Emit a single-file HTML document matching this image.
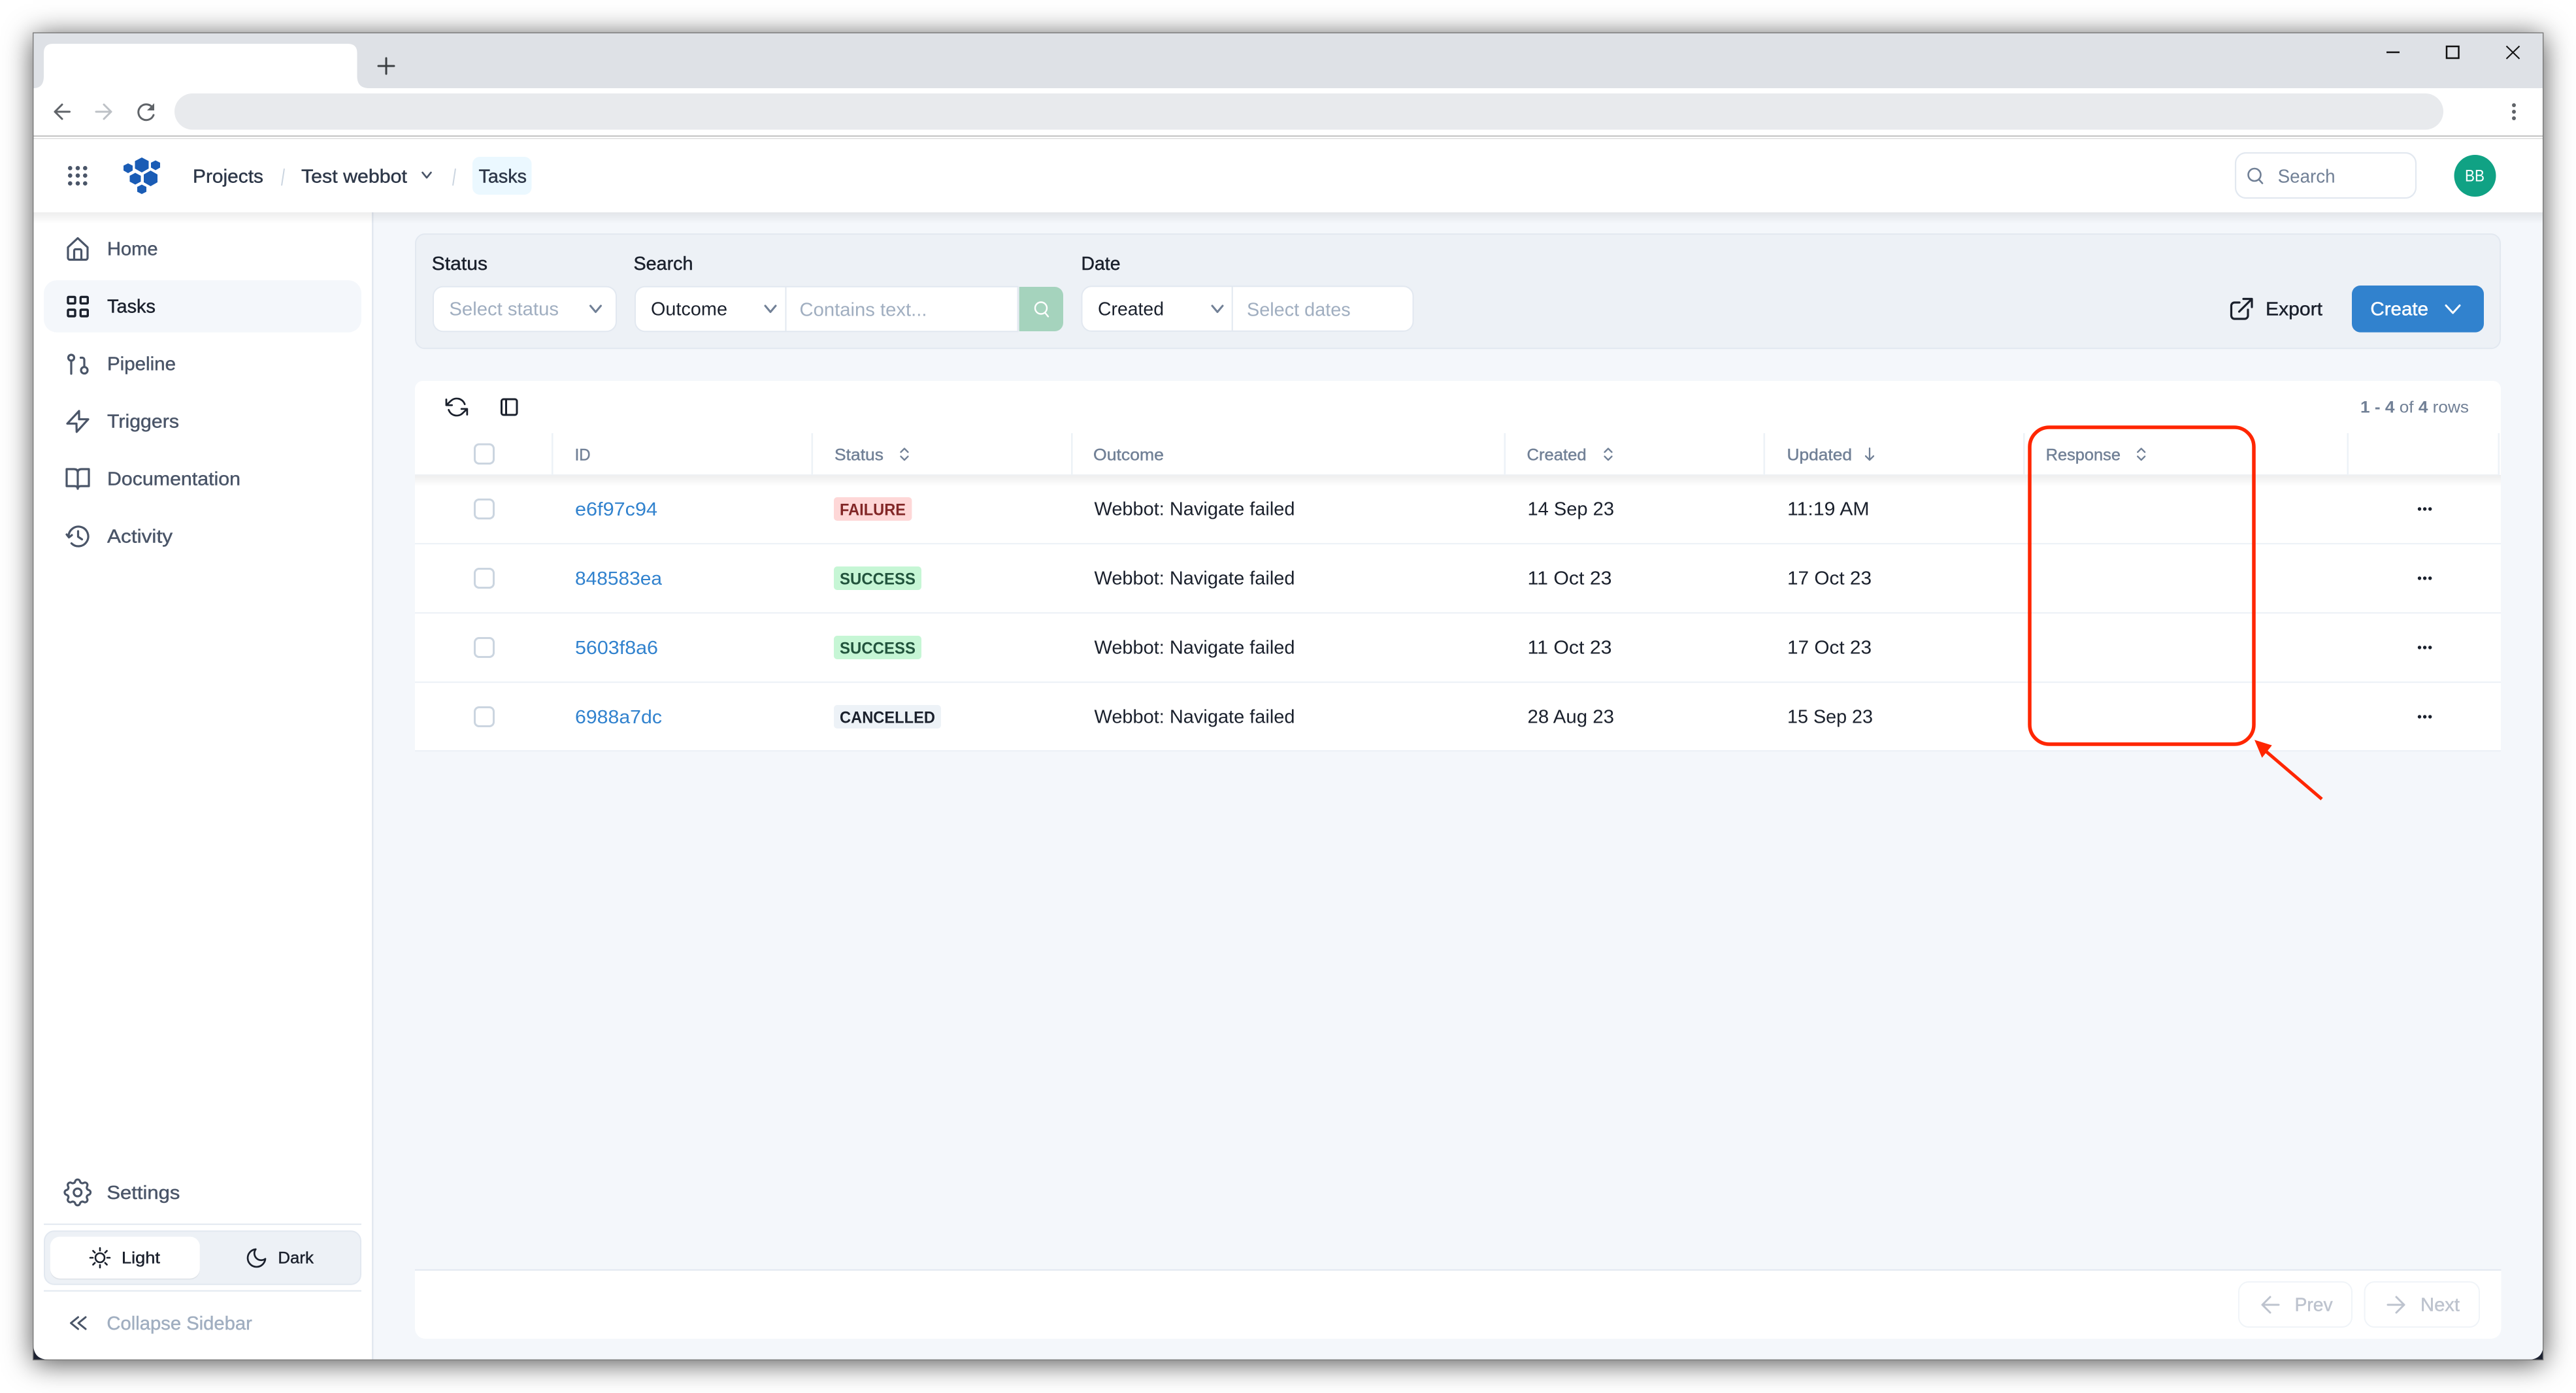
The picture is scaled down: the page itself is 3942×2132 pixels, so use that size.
<!DOCTYPE html>
<html><head><meta charset="utf-8"><title>Tasks</title>
<style>
html,body{margin:0;padding:0;background:#fff;width:3942px;height:2132px;overflow:hidden}
#shadow{position:absolute;left:51px;top:50px;width:3841px;height:2031px;box-shadow:0 5px 40px rgba(0,0,0,.7);background:#1b2030}
svg{position:absolute;left:0;top:0}
text{font-family:"Liberation Sans",sans-serif;font-size:29px;fill:#1a202c}
.s{font-size:25px}
.m{stroke:currentColor;stroke-width:.45px}
.g{color:#4a5568;fill:#4a5568}
.k{color:#1a202c;fill:#1a202c}
.p{fill:#a0aec0}
.h{color:#718096;fill:#718096}
.l{fill:#3182ce}
.b{font-weight:700;font-size:25px}
.i{fill:none;stroke-linecap:round;stroke-linejoin:round}
</style></head><body>
<div id="shadow"></div>
<svg width="3942" height="2132" viewBox="0 0 3942 2132" xmlns="http://www.w3.org/2000/svg">
<defs>
<linearGradient id="sh" x1="0" y1="0" x2="0" y2="1"><stop offset="0" stop-color="#000" stop-opacity=".07"/><stop offset="1" stop-color="#000" stop-opacity="0"/></linearGradient>
</defs>
<!-- window -->
<path d="M51 50H3892V2057Q3892 2081 3868 2081H75Q51 2081 51 2057Z" fill="#fff"/>
<rect x="51" y="50" width="3841" height="85" fill="#dee1e6"/>
<path d="M51 135Q67 135 67 117V81Q67 67 81 67H532Q546.5 67 546.5 81V117Q546.5 135 565 135Z" fill="#fff"/>
<path d="M579 101H603M591 89V113" class="i" stroke="#3c4043" stroke-width="3"/>
<path d="M3652 80H3672" stroke="#111" stroke-width="2.5"/>
<rect x="3744" y="71" width="18.5" height="18" fill="none" stroke="#111" stroke-width="2.5"/>
<path d="M3835.5 70.5L3855.5 90M3855.5 70.5L3835.5 90" stroke="#111" stroke-width="2"/>
<!-- toolbar -->
<rect x="267" y="143" width="3472" height="55.5" rx="27.7" fill="#e8eaed"/>
<path d="M106.5 171H84M95 160L84 171L95 182" class="i" stroke="#5f6368" stroke-width="3"/>
<path d="M147 171H170M159 160L170 171L159 182" class="i" stroke="#bdc1c6" stroke-width="3"/>
<path d="M232.5 163.5A12 12 0 1 0 235 176" class="i" stroke="#5f6368" stroke-width="3"/>
<path d="M236 158V169H225Z" fill="#5f6368"/>
<circle cx="3847" cy="161" r="3" fill="#5f6368"/><circle cx="3847" cy="171" r="3" fill="#5f6368"/><circle cx="3847" cy="181" r="3" fill="#5f6368"/>
<rect x="51" y="207.5" width="3841" height="1.5" fill="#b0b0b0"/>
<rect x="51" y="211" width="3841" height="2" fill="#e6e6e6"/>
<!-- main bg -->
<path d="M570 325H3892V2057Q3892 2081 3868 2081H570Z" fill="#f4f7fb"/>
<rect x="569" y="325" width="2.5" height="1756" fill="#e2e8f0"/>
<!-- nav shadow -->
<rect x="51" y="325" width="3841" height="18" fill="url(#sh)"/>
<!-- grid dots -->
<g fill="#4a5568"><circle cx="107.3" cy="257.3" r="3.3"/><circle cx="119" cy="257.3" r="3.3"/><circle cx="130.3" cy="257.3" r="3.3"/><circle cx="107.3" cy="268.7" r="3.3"/><circle cx="119" cy="268.7" r="3.3"/><circle cx="130.3" cy="268.7" r="3.3"/><circle cx="107.3" cy="280.7" r="3.3"/><circle cx="119" cy="280.7" r="3.3"/><circle cx="130.3" cy="280.7" r="3.3"/></g>
<!-- logo -->
<g fill="#1a5cb5">
<path d="M217 241L227.5 246.5V258L217 264L206.5 258V246.5Z"/>
<path d="M196 250L203 253.5V261L196 265L189 261V253.5Z"/>
<path d="M238 245.5L245 249V256.5L238 260.5L231 256.5V249Z"/>
<path d="M207 264.5L215.5 269V278L207 282.5L198.5 278V269Z"/>
<path d="M230.5 261L241 267V279L230.5 285L220 279V267Z"/>
<path d="M217 282.5L224 286V293.5L217 297L210 293.5V286Z"/>
</g>
<!-- breadcrumb -->
<text x="295" y="279.5" textLength="108" lengthAdjust="spacingAndGlyphs" class="m" style="color:#2d3748;fill:#2d3748">Projects</text>
<path d="M431 284L435 258M693 284L697 258" stroke="#cbd5e0" stroke-width="2"/>
<text x="461" y="279.5" textLength="162" lengthAdjust="spacingAndGlyphs" class="m" style="color:#2d3748;fill:#2d3748">Test webbot</text>
<path d="M646.5 264L653 272L659.5 264" class="i" stroke="#4a5568" stroke-width="2.6"/>
<rect x="723" y="240" width="90.5" height="58" rx="11" fill="#ebf8ff"/>
<text x="732.5" y="279.5" textLength="73.5" lengthAdjust="spacingAndGlyphs" class="m" style="color:#2d3748;fill:#2d3748">Tasks</text>
<!-- top search -->
<rect x="3421" y="234" width="276" height="69" rx="16" fill="#fff" stroke="#e2e8f0" stroke-width="2.2"/>
<circle cx="3450" cy="267.5" r="9.5" fill="none" stroke="#718096" stroke-width="2.6"/>
<path d="M3457 275L3462 280.5" class="i" stroke="#718096" stroke-width="2.6"/>
<text x="3485.6" y="279.5" textLength="88" lengthAdjust="spacingAndGlyphs" class="h">Search</text>
<circle cx="3787.5" cy="269" r="32" fill="#10a284"/>
<text x="3772" y="277.5" textLength="30" lengthAdjust="spacingAndGlyphs" class="s" style="fill:#fff">BB</text>
<!-- sidebar -->
<rect x="67" y="429" width="486" height="79.7" rx="20" fill="#f4f7fb"/>
<g class="i" stroke="#4a5568" stroke-width="3.2">
<path d="M104 378.5L119 364.5L134 378.5V394A3 3 0 0 1 131 397.5H107A3 3 0 0 1 104 394Z"/>
<path d="M113.5 397V383.5A2 2 0 0 1 115.5 381.5H122.5A2 2 0 0 1 124.5 383.5V397"/>
<circle cx="109" cy="547.5" r="4.5"/><path d="M109 552V572"/>
<circle cx="129" cy="566.7" r="5"/><path d="M123.5 547.5H126A3 3 0 0 1 129 550.5V561.5"/>
<path d="M121 629L103 648.3H117L117.3 661L135 641.7H121Z"/>
<path d="M102 718H113Q119 718 119 723Q119 718 125 718H136V744H124Q119 744 119 748Q119 744 114 744H102Z"/><path d="M119 723V748"/>
<path d="M105 821A15 15 0 1 1 109.4 831.6"/><path d="M102 818L105.5 822.5L110 819"/><path d="M119.5 813V821.5L125.5 825.5"/>
</g>
<g fill="none" stroke="#1a202c" stroke-width="3.4">
<rect x="104" y="454.4" width="11" height="10" rx="1.2"/><rect x="123.3" y="454.4" width="11" height="10" rx="1.2"/>
<rect x="104" y="474" width="11" height="10" rx="1.2"/><rect x="123.3" y="474" width="11" height="10" rx="1.2"/>
</g>
<text x="164" y="390.7" textLength="77.5" lengthAdjust="spacingAndGlyphs" class="m g">Home</text>
<text x="164" y="478.3" textLength="74" lengthAdjust="spacingAndGlyphs" class="m k">Tasks</text>
<text x="164" y="566.7" textLength="105" lengthAdjust="spacingAndGlyphs" class="m g">Pipeline</text>
<text x="164" y="654.7" textLength="110" lengthAdjust="spacingAndGlyphs" class="m g">Triggers</text>
<text x="164" y="742.7" textLength="204" lengthAdjust="spacingAndGlyphs" class="m g">Documentation</text>
<text x="164" y="830.7" textLength="100" lengthAdjust="spacingAndGlyphs" class="m g">Activity</text>
<g transform="translate(92.35 1798.6) scale(2.2)"><path class="i" stroke="#4a5568" stroke-width="1.45" d="M10.325 4.317c.426 -1.756 2.924 -1.756 3.35 0a1.724 1.724 0 0 0 2.573 1.066c1.543 -.94 3.31 .826 2.37 2.37a1.724 1.724 0 0 0 1.065 2.572c1.756 .426 1.756 2.924 0 3.35a1.724 1.724 0 0 0 -1.066 2.573c.94 1.543 -.826 3.31 -2.37 2.37a1.724 1.724 0 0 0 -2.572 1.065c-.426 1.756 -2.924 1.756 -3.35 0a1.724 1.724 0 0 0 -2.573 -1.066c-1.543 .94 -3.31 -.826 -2.37 -2.37a1.724 1.724 0 0 0 -1.065 -2.572c-1.756 -.426 -1.756 -2.924 0 -3.35a1.724 1.724 0 0 0 1.066 -2.573c-.94 -1.543 .826 -3.31 2.37 -2.37c1 .608 2.296 .07 2.572 -1.065z"/><circle cx="12" cy="12" r="2.7" class="i" stroke="#4a5568" stroke-width="1.45"/></g>
<text x="163.4" y="1835" textLength="112" lengthAdjust="spacingAndGlyphs" class="m g">Settings</text>
<rect x="67" y="1872.7" width="486" height="2" fill="#e2e8f0"/>
<rect x="68" y="1884.3" width="484" height="81.4" rx="15" fill="#edf1f6" stroke="#e2e8f0" stroke-width="2"/>
<rect x="76.8" y="1894.5" width="229" height="64" rx="15" fill="#000" opacity=".05"/>
<rect x="76.8" y="1892.7" width="229" height="64" rx="15" fill="#fff"/>
<circle cx="153" cy="1925" r="7" fill="none" stroke="#1a202c" stroke-width="2.6"/>
<path d="M153 1910V1914M153 1936V1940M138 1925H142M164 1925H168M142.4 1914.4L145.2 1917.2M160.8 1932.8L163.6 1935.6M142.4 1935.6L145.2 1932.8M160.8 1917.2L163.6 1914.4" class="i" stroke="#1a202c" stroke-width="2.6"/>
<text x="186" y="1933.3" textLength="59" lengthAdjust="spacingAndGlyphs" class="s m k">Light</text>
<g transform="translate(374.5 1907.5) scale(1.5)"><path class="i" stroke="#1a202c" stroke-width="1.8" d="M21 12.79A9 9 0 1 1 11.21 3 7 7 0 0 0 21 12.79z"/></g>
<text x="425.4" y="1933.3" textLength="54.5" lengthAdjust="spacingAndGlyphs" class="s m k">Dark</text>
<rect x="67" y="1974.7" width="486" height="2" fill="#e2e8f0"/>
<path d="M119.5 2016L108.5 2025L119.5 2034M131 2016L120 2025L131 2034" class="i" stroke="#4a5568" stroke-width="3"/>
<text x="163.4" y="2035" textLength="222.5" lengthAdjust="spacingAndGlyphs" class="m" style="color:#a0aec0;fill:#a0aec0">Collapse Sidebar</text>
<!-- filter panel -->
<rect x="636" y="358.3" width="3190" height="175" rx="14" fill="#edf1f6" stroke="#e2e8f0" stroke-width="2"/>
<text x="660.7" y="413" textLength="85.3" lengthAdjust="spacingAndGlyphs" class="m k">Status</text>
<text x="969.5" y="413" textLength="91" lengthAdjust="spacingAndGlyphs" class="m k">Search</text>
<text x="1654.5" y="413" textLength="60" lengthAdjust="spacingAndGlyphs" class="m k">Date</text>
<rect x="663" y="438.7" width="280" height="68.5" rx="15" fill="#fff" stroke="#e2e8f0" stroke-width="2"/>
<text x="687.4" y="482.7" textLength="167.6" lengthAdjust="spacingAndGlyphs" class="p">Select status</text>
<path d="M903.5 468L911.5 477.5L919.5 468" class="i" stroke="#718096" stroke-width="3"/>
<path d="M1557.5 438.7H986A15 15 0 0 0 972 453.7V492.2A15 15 0 0 0 986 507.2H1557.5Z" fill="#fff" stroke="#e2e8f0" stroke-width="2"/>
<text x="996" y="482.7" textLength="117" lengthAdjust="spacingAndGlyphs" class="k">Outcome</text>
<path d="M1171 468L1179 477.5L1187 468" class="i" stroke="#718096" stroke-width="3"/>
<rect x="1201.5" y="438.7" width="2" height="68.5" fill="#e2e8f0"/>
<text x="1223.5" y="483.5" textLength="195" lengthAdjust="spacingAndGlyphs" class="p">Contains text...</text>
<path d="M1559.6 439H1614A13 13 0 0 1 1627 452V494A13 13 0 0 1 1614 507H1559.6Z" fill="#a5d3bd"/>
<circle cx="1593" cy="471.5" r="9" fill="none" stroke="#fff" stroke-width="2.4"/>
<path d="M1599.5 479L1604 484.5" class="i" stroke="#fff" stroke-width="2.4"/>
<rect x="1655.5" y="438.3" width="507" height="68.5" rx="15" fill="#fff" stroke="#e2e8f0" stroke-width="2"/>
<text x="1680" y="482.7" textLength="101" lengthAdjust="spacingAndGlyphs" class="k">Created</text>
<path d="M1855 468L1863 477.5L1871 468" class="i" stroke="#718096" stroke-width="3"/>
<rect x="1884.7" y="438.3" width="2" height="68.5" fill="#e2e8f0"/>
<text x="1908" y="483.5" textLength="158.7" lengthAdjust="spacingAndGlyphs" class="p">Select dates</text>
<path d="M3427 463H3419A5 5 0 0 0 3414.5 468V483A5 5 0 0 0 3419 488H3435A5 5 0 0 0 3440 483V474" class="i" stroke="#1a202c" stroke-width="3.2"/>
<path d="M3426.5 477L3445.5 458M3433 457.5H3446V470" class="i" stroke="#1a202c" stroke-width="3.2"/>
<text x="3467" y="482.5" textLength="87" lengthAdjust="spacingAndGlyphs" class="m k">Export</text>
<rect x="3599" y="437" width="202" height="71.6" rx="13" fill="#3182ce"/>
<text x="3627.4" y="482.5" textLength="88.6" lengthAdjust="spacingAndGlyphs" class="m" style="color:#fff;fill:#fff">Create</text>
<path d="M3743 467.5L3753.6 479L3764 467.5" class="i" stroke="#fff" stroke-width="3"/>
<!-- table panel -->
<path d="M635 595A12 12 0 0 1 647 583H3815A12 12 0 0 1 3827 595V1149.5H635Z" fill="#fff"/>
<rect x="635" y="727" width="3192" height="18" fill="url(#sh)"/>
<rect x="635" y="1148" width="3192" height="2.5" fill="#edf2f7"/>
<rect x="635" y="726" width="3189" height="1.5" fill="#eef1f5"/>
<g fill="#edf2f7">
<rect x="635" y="831" width="3192" height="2.2"/><rect x="635" y="937" width="3192" height="2.2"/><rect x="635" y="1043" width="3192" height="2.2"/>
<rect x="844" y="663" width="2.6" height="64"/><rect x="1241.5" y="663" width="2.6" height="64"/><rect x="1639" y="663" width="2.6" height="64"/><rect x="2301.5" y="663" width="2.6" height="64"/><rect x="2698.5" y="663" width="2.6" height="64"/><rect x="3096" y="663" width="2.6" height="64"/><rect x="3591.5" y="663" width="2.6" height="64"/><rect x="3822.5" y="663" width="2.6" height="64"/>
</g>
<g transform="translate(681.5 605.6) scale(1.45)"><path class="i" stroke="#1a202c" stroke-width="1.9" d="M1 4v6h6M23 20v-6h-6M20.49 9A9 9 0 0 0 5.64 5.64L1 10m22 4l-4.64 4.36A9 9 0 0 1 3.51 15"/></g>
<rect x="767.5" y="611" width="23.5" height="24" rx="3" fill="none" stroke="#1a202c" stroke-width="3"/>
<path d="M774.5 611V635" stroke="#1a202c" stroke-width="3"/>
<text x="3612" y="631.6" textLength="166" lengthAdjust="spacingAndGlyphs" class="s h"><tspan font-weight="700">1 - 4</tspan> of <tspan font-weight="700">4</tspan> rows</text>
<!-- checkboxes -->
<g fill="#fff" stroke="#cbd5e0" stroke-width="3">
<rect x="726.5" y="680" width="29" height="29.5" rx="6.5"/>
<rect x="726.5" y="764.5" width="29" height="29" rx="6.5"/>
<rect x="726.5" y="870.5" width="29" height="29" rx="6.5"/>
<rect x="726.5" y="976.5" width="29" height="29" rx="6.5"/>
<rect x="726.5" y="1082.5" width="29" height="29" rx="6.5"/>
</g>
<!-- headers -->
<text x="879.6" y="704.4" textLength="24" lengthAdjust="spacingAndGlyphs" class="s m h">ID</text>
<text x="1277" y="704.4" textLength="75" lengthAdjust="spacingAndGlyphs" class="s m h">Status</text>
<text x="1673" y="704.4" textLength="108" lengthAdjust="spacingAndGlyphs" class="s m h">Outcome</text>
<text x="2336.5" y="704.4" textLength="91.2" lengthAdjust="spacingAndGlyphs" class="s m h">Created</text>
<text x="2734.5" y="704.4" textLength="99.5" lengthAdjust="spacingAndGlyphs" class="s m h">Updated</text>
<text x="3130.6" y="704.4" textLength="114.4" lengthAdjust="spacingAndGlyphs" class="s m h">Response</text>
<g class="i" stroke="#718096" stroke-width="2.3">
<path d="M1378.5 692L1384 686.5L1389.5 692M1378.5 698.5L1384 704L1389.5 698.5"/>
<path d="M2455.5 692L2461 686.5L2466.5 692M2455.5 698.5L2461 704L2466.5 698.5"/>
<path d="M3271.2 692L3276.7 686.5L3282.2 692M3271.2 698.5L3276.7 704L3282.2 698.5"/>
<path d="M2861 686V704M2855 698L2861 704L2867 698"/>
</g>
<!-- rows -->
<text x="880" y="789" textLength="126" lengthAdjust="spacingAndGlyphs" class="l">e6f97c94</text>
<text x="880" y="895" textLength="133" lengthAdjust="spacingAndGlyphs" class="l">848583ea</text>
<text x="880" y="1001" textLength="127" lengthAdjust="spacingAndGlyphs" class="l">5603f8a6</text>
<text x="880" y="1107" textLength="133" lengthAdjust="spacingAndGlyphs" class="l">6988a7dc</text>
<rect x="1276" y="761" width="119.4" height="36" rx="5" fill="#fed7d7"/>
<text x="1285" y="788.3" textLength="101" lengthAdjust="spacingAndGlyphs" class="b" style="fill:#822727">FAILURE</text>
<rect x="1276" y="867" width="134" height="36" rx="5" fill="#c6f6d5"/>
<text x="1285" y="894.3" textLength="116" lengthAdjust="spacingAndGlyphs" class="b" style="fill:#22543d">SUCCESS</text>
<rect x="1276" y="973" width="134" height="36" rx="5" fill="#c6f6d5"/>
<text x="1285" y="1000.3" textLength="116" lengthAdjust="spacingAndGlyphs" class="b" style="fill:#22543d">SUCCESS</text>
<rect x="1276" y="1079" width="164" height="36" rx="5" fill="#edf2f7"/>
<text x="1285" y="1106.3" textLength="146" lengthAdjust="spacingAndGlyphs" class="b">CANCELLED</text>
<text x="1674.5" y="788.5" textLength="307" lengthAdjust="spacingAndGlyphs">Webbot: Navigate failed</text>
<text x="1674.5" y="894.5" textLength="307" lengthAdjust="spacingAndGlyphs">Webbot: Navigate failed</text>
<text x="1674.5" y="1000.5" textLength="307" lengthAdjust="spacingAndGlyphs">Webbot: Navigate failed</text>
<text x="1674.5" y="1106.5" textLength="307" lengthAdjust="spacingAndGlyphs">Webbot: Navigate failed</text>
<text x="2337.5" y="788.5" textLength="132.5" lengthAdjust="spacingAndGlyphs">14 Sep 23</text>
<text x="2337.5" y="894.5" textLength="129" lengthAdjust="spacingAndGlyphs">11 Oct 23</text>
<text x="2337.5" y="1000.5" textLength="129" lengthAdjust="spacingAndGlyphs">11 Oct 23</text>
<text x="2337.5" y="1106.5" textLength="132.5" lengthAdjust="spacingAndGlyphs">28 Aug 23</text>
<text x="2735" y="788.5" textLength="125.6" lengthAdjust="spacingAndGlyphs">11:19 AM</text>
<text x="2735" y="894.5" textLength="129" lengthAdjust="spacingAndGlyphs">17 Oct 23</text>
<text x="2735" y="1000.5" textLength="129" lengthAdjust="spacingAndGlyphs">17 Oct 23</text>
<text x="2735" y="1106.5" textLength="131" lengthAdjust="spacingAndGlyphs">15 Sep 23</text>
<g fill="#1a202c">
<circle cx="3702.5" cy="779" r="2.7"/><circle cx="3710.6" cy="779" r="2.7"/><circle cx="3718.7" cy="779" r="2.7"/>
<circle cx="3702.5" cy="885" r="2.7"/><circle cx="3710.6" cy="885" r="2.7"/><circle cx="3718.7" cy="885" r="2.7"/>
<circle cx="3702.5" cy="991" r="2.7"/><circle cx="3710.6" cy="991" r="2.7"/><circle cx="3718.7" cy="991" r="2.7"/>
<circle cx="3702.5" cy="1097" r="2.7"/><circle cx="3710.6" cy="1097" r="2.7"/><circle cx="3718.7" cy="1097" r="2.7"/>
</g>
<!-- footer -->
<path d="M635 1943H3827.5V2033A16 16 0 0 1 3811.5 2049H651A16 16 0 0 1 635 2033Z" fill="#fff"/>
<rect x="635" y="1942.7" width="3192.5" height="2" fill="#e2e8f0"/>
<rect x="3426" y="1962" width="173" height="69" rx="15" fill="#fff" stroke="#f0f4f8" stroke-width="2"/>
<rect x="3618.6" y="1962" width="175.4" height="69" rx="15" fill="#fff" stroke="#f0f4f8" stroke-width="2"/>
<path d="M3487 1997H3462M3474 1985L3462 1997L3474 2009" class="i" stroke="#bdc3ce" stroke-width="3"/>
<path d="M3654 1997H3679M3667 1985L3679 1997L3667 2009" class="i" stroke="#bdc3ce" stroke-width="3"/>
<text x="3511.5" y="2006.7" textLength="58.2" lengthAdjust="spacingAndGlyphs" class="m" style="color:#bdc3ce;fill:#bdc3ce">Prev</text>
<text x="3704" y="2006.7" textLength="60" lengthAdjust="spacingAndGlyphs" class="m" style="color:#bdc3ce;fill:#bdc3ce">Next</text>
<!-- window border -->
<rect x="50.7" y="50.3" width="3841" height="2031" fill="none" stroke="#7a7a7a" stroke-width="1.4"/>
<!-- annotation -->
<rect x="3106" y="654" width="343" height="485" rx="30" fill="none" stroke="#ff2600" stroke-width="5.5"/>
<path d="M3553 1223L3463 1146" fill="none" stroke="#ff2600" stroke-width="5"/>
<path d="M3450 1132.4L3476.7 1140.8L3461.5 1159.8Z" fill="#ff2600"/>
</svg>
</body></html>
